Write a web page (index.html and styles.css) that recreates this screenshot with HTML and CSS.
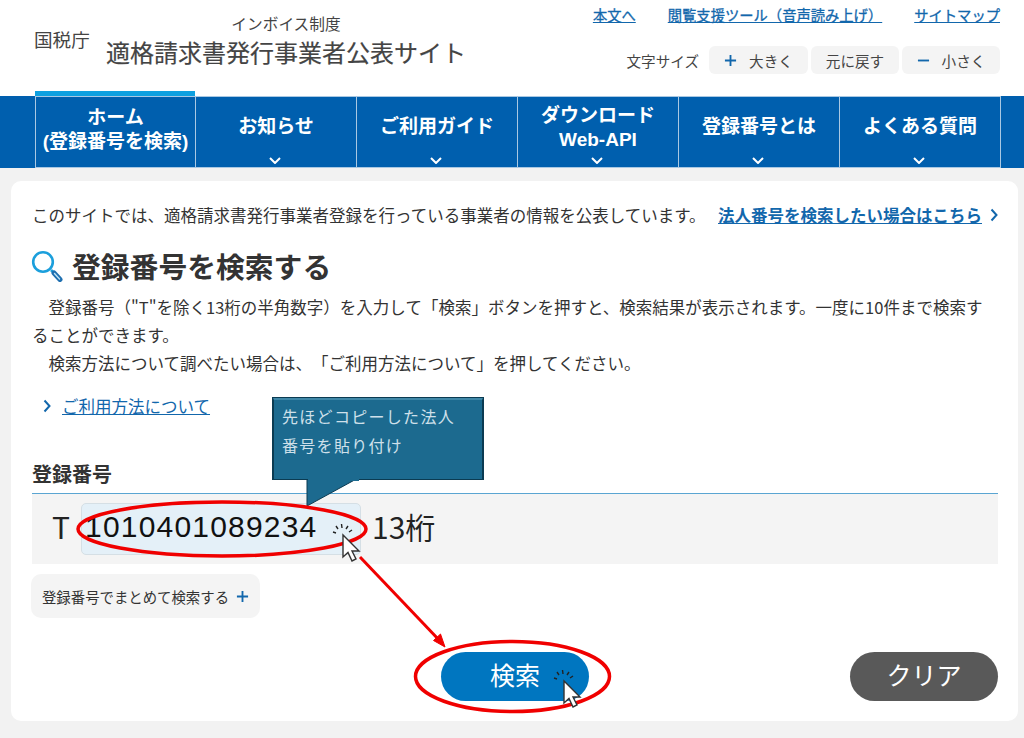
FILE: index.html
```html
<!DOCTYPE html>
<html lang="ja">
<head>
    <meta charset="UTF-8">
    <title>適格請求書発行事業者公表サイト</title>
    <link rel="stylesheet" href="styles.css">
</head>
<body>
    <!-- Cabecera -->
    <header class="site-header">
        <div class="brand">
            <div class="brand-agency">国税庁</div>
            <div class="brand-title">
                <div class="brand-sub">インボイス制度</div>
                <div class="brand-main">適格請求書発行事業者公表サイト</div>
            </div>
        </div>
        <div class="header-tools">
            <div class="top-links">
                <a href="#">本文へ</a>
                <a href="#">閲覧支援ツール（音声読み上げ）</a>
                <a href="#">サイトマップ</a>
            </div>
            <div class="font-size">
                <span class="font-size-label">文字サイズ</span>
                <button class="size-btn size-large"><svg class="size-icon" viewBox="0 0 14 14"><path d="M7 1v12M1 7h12"/></svg>大きく</button>
                <button class="size-btn size-reset">元に戻す</button>
                <button class="size-btn size-small"><svg class="size-icon" viewBox="0 0 14 14"><path d="M1 7h12"/></svg>小さく</button>
            </div>
        </div>
    </header>

    <!-- Menu -->
    <nav class="global-nav">
        <a class="nav-item active" href="#"><span>ホーム<br>(登録番号を検索)</span></a>
        <a class="nav-item" href="#"><span>お知らせ</span><svg class="nav-chevron" viewBox="0 0 12 7"><path d="M1 1l5 5 5-5"/></svg></a>
        <a class="nav-item" href="#"><span>ご利用ガイド</span><svg class="nav-chevron" viewBox="0 0 12 7"><path d="M1 1l5 5 5-5"/></svg></a>
        <a class="nav-item two-lines" href="#"><span>ダウンロード<br>Web-API</span><svg class="nav-chevron" viewBox="0 0 12 7"><path d="M1 1l5 5 5-5"/></svg></a>
        <a class="nav-item" href="#"><span>登録番号とは</span><svg class="nav-chevron" viewBox="0 0 12 7"><path d="M1 1l5 5 5-5"/></svg></a>
        <a class="nav-item" href="#"><span>よくある質問</span><svg class="nav-chevron" viewBox="0 0 12 7"><path d="M1 1l5 5 5-5"/></svg></a>
    </nav>

    <!-- Contenido -->
    <main class="main-area">
        <section class="card">
            <div class="notice">
                <p>このサイトでは、適格請求書発行事業者登録を行っている事業者の情報を公表しています。</p>
                <a class="notice-link" href="#"><span>法人番号を検索したい場合はこちら</span><svg class="chevron" viewBox="0 0 8 14"><path d="M1.500 1.500L6.500 7l-5 5.500"/></svg></a>
            </div>

            <h1 class="page-title">
                <svg class="search-icon" viewBox="0 0 32 32">
                    <circle cx="12" cy="12" r="9.800" fill="none" stroke="#1b9fdc" stroke-width="2.600"/>
                    <path d="M20 20l2 2" stroke="#1b9fdc" stroke-width="2.600"/>
                    <path d="M23 23l6 6.500" stroke="#1f6fb0" stroke-width="5" stroke-linecap="round"/>
                    <path d="M23.500 23.500l5 5.500" stroke="#bfe3f5" stroke-width="1.400" stroke-linecap="round"/>
                </svg>
                登録番号を検索する
            </h1>
            <p class="lead">登録番号（"T"を除く13桁の半角数字）を入力して「検索」ボタンを押すと、検索結果が表示されます。一度に10件まで検索することができます。</p>
            <p class="lead">検索方法について調べたい場合は、「ご利用方法について」を押してください。</p>

            <a class="usage-link" href="#"><svg class="chevron" viewBox="0 0 8 14"><path d="M1.500 1.500L6.500 7l-5 5.500"/></svg><span>ご利用方法について</span></a>

            <h2 class="field-label">登録番号</h2>
            <div class="field-rule"></div>
            <div class="field-band">
                <span class="field-prefix">T</span>
                <div class="field-input">1010401089234</div>
                <span class="field-suffix">13桁</span>
            </div>

            <button class="bulk-btn">登録番号でまとめて検索する<svg class="bulk-icon" viewBox="0 0 14 14"><path d="M7 1v12M1 7h12"/></svg></button>

            <div class="actions">
                <button class="btn-search">検索</button>
                <button class="btn-clear">クリア</button>
            </div>
        </section>
    </main>

    <!-- Anotaciones sobre la captura -->
    <svg class="overlay" viewBox="0 0 1024 738">
        <path d="M307 477V506L360 477Z" fill="#1c6a8f" stroke="#0b3b52" stroke-width="1"/>
        <ellipse cx="222" cy="529" rx="144" ry="27" fill="none" stroke="#f00000" stroke-width="3.500"/>
        <ellipse cx="512.500" cy="676.500" rx="97" ry="35" fill="none" stroke="#f00000" stroke-width="3.500"/>
        <path d="M360 557L440 641" stroke="#f00000" stroke-width="3"/>
        <path d="M445 647L433.500 640.500 440.500 634Z" fill="#f00000" stroke="#f00000"/>
        <g class="click-mark" transform="translate(343 535)">
            <path d="M-7 -2l-3 -1M-5 -6l-2 -3M-1 -7l-.5 -4M3 -6l2 -3M6 -3l3 -2"/>
            <path class="cursor" d="M0 0V22L5 17.500 9 26 13 24 9 16H16Z"/>
        </g>
        <g class="click-mark" transform="translate(564 681)">
            <path d="M-7 -2l-3 -1M-5 -6l-2 -3M-1 -7l-.5 -4M3 -6l2 -3M6 -3l3 -2"/>
            <path class="cursor" d="M0 0V22L5 17.500 9 26 13 24 9 16H16Z"/>
        </g>
    </svg>
    <div class="callout">先ほどコピーした法人<br>番号を貼り付け</div>
</body>
</html>
```

FILE: styles.css
```css
/* Base */
* {
    box-sizing: border-box;
}

body {
    margin: 0;
    width: 1024px;
    height: 738px;
    position: relative;
    overflow: hidden;
    background: #fff;
    color: #333;
    font-family: "Noto Sans CJK JP", "Liberation Sans", sans-serif;
    font-size: 16.500px;
    text-spacing-trim: space-all;
}

a {
    color: #1267ac;
}

p,
h1,
h2 {
    margin: 0;
}

button {
    font-family: inherit;
    border: none;
    padding: 0;
}

/* Cabecera */
.site-header {
    height: 91px;
    padding: 0 24px 0 34px;
    display: flex;
    justify-content: space-between;
}

.brand {
    display: flex;
    align-items: flex-start;
    color: #444;
}

.brand-agency {
    font-size: 18.600px;
    line-height: 24px;
    margin-top: 27px;
    width: 72px;
}

.brand-title {
    padding-top: 14px;
    text-align: center;
}

.brand-sub {
    font-size: 15.700px;
    line-height: 20px;
}

.brand-main {
    font-size: 24px;
    line-height: 36px;
    -webkit-text-stroke: 0.2px #444;
}

.header-tools {
    display: flex;
    flex-direction: column;
    align-items: flex-end;
}

.top-links {
    display: flex;
    gap: 32px;
    font-size: 14.300px;
    line-height: 20px;
    padding-top: 5px;
    -webkit-text-stroke: 0.3px #1267ac;
}

.font-size {
    display: flex;
    align-items: center;
    margin-top: 21px;
    font-size: 14.600px;
}

.font-size-label {
    margin-right: 10px;
    color: #444;
}

.size-btn {
    height: 28px;
    margin-left: 3px;
    background: #f4f4f4;
    border-radius: 6px;
    color: #444;
    font-size: 14.600px;
    display: flex;
    align-items: center;
    justify-content: center;
}

.size-large {
    width: 99px;
    margin-left: 0;
}

.size-reset {
    width: 88px;
}

.size-small {
    width: 98px;
}

.size-icon {
    width: 13px;
    height: 13px;
    margin-right: 12px;
    fill: none;
    stroke: #1267ac;
    stroke-width: 2;
}

/* Menu */
.global-nav {
    height: 77px;
    padding: 5px 0 0 35px;
    display: flex;
    position: relative;
    background: linear-gradient(#fff 5px, #005fae 5px);
}

.nav-item {
    width: 161px;
    position: relative;
    display: flex;
    align-items: center;
    justify-content: center;
    padding-bottom: 10px;
    border-left: 1px solid #a9c8e3;
    border-top: 1px solid #a9c8e3;
    border-bottom: 1px solid #a9c8e3;
    color: #fff;
    font-family: "Liberation Sans", "Noto Sans CJK JP", sans-serif;
    font-size: 19px;
    font-weight: 700;
    line-height: 24px;
    text-align: center;
    text-decoration: none;
}

.nav-item:last-child {
    border-right: 1px solid #a9c8e3;
    width: 162px;
}

.nav-item.two-lines {
    padding-bottom: 8px;
}

.nav-item.active {
    width: 160px;
    padding-bottom: 4px;
    box-shadow: 0 -5px 0 #0ea0e0;
}

.nav-chevron {
    position: absolute;
    left: 73px;
    bottom: 3px;
    width: 12px;
    height: 7px;
    fill: none;
    stroke: #fff;
    stroke-width: 2;
}

/* Contenido */
.main-area {
    height: 570px;
    background: #f2f2f2;
    padding: 13px 6px 17px 11px;
}

.card {
    height: 540px;
    background: #fff;
    border-radius: 10px;
    padding: 20px 20px 0 21px;
}

.notice {
    display: flex;
    justify-content: space-between;
    align-items: center;
    height: 28px;
}

.notice-link {
    display: flex;
    align-items: center;
    gap: 8px;
    font-weight: 700;
}

.chevron {
    width: 8px;
    height: 14px;
    fill: none;
    stroke: #1267ac;
    stroke-width: 2;
}

.page-title {
    display: flex;
    align-items: center;
    gap: 9px;
    margin-top: 17px;
    height: 40px;
    font-size: 28.800px;
    font-weight: 700;
    line-height: 40px;
}

.search-icon {
    width: 32px;
    height: 32px;
    margin-left: -1px;
}

.lead {
    line-height: 28px;
    text-indent: 1em;
}

.page-title + .lead {
    margin-top: 7px;
}

.usage-link {
    display: flex;
    align-items: center;
    gap: 11px;
    margin: 15px 0 0 11px;
    height: 28px;
}

.field-label {
    margin-top: 38px;
    height: 32px;
    font-size: 20px;
    line-height: 32px;
    font-weight: 700;
}

.field-rule {
    height: 1px;
    margin-top: 3px;
    background: #5aa5d2;
}

.field-band {
    height: 70px;
    padding: 9px 0 0 20px;
    display: flex;
    align-items: flex-start;
    background: #f4f4f4;
    color: #222;
    font-size: 30px;
}

.field-prefix {
    width: 29px;
    line-height: 46px;
}

.field-input {
    width: 280px;
    height: 52px;
    padding-left: 3px;
    background: #e4f0f8;
    border: 1px solid #d5dfe5;
    border-radius: 5px;
    color: #111;
    font-family: "Liberation Sans", "Noto Sans CJK JP", sans-serif;
    font-size: 30px;
    letter-spacing: 1.200px;
    line-height: 46px;
}

.field-suffix {
    margin-left: 11px;
    line-height: 46px;
}

.bulk-btn {
    margin: 10px 0 0 -1px;
    width: 229px;
    height: 44px;
    display: flex;
    align-items: center;
    justify-content: center;
    gap: 7px;
    background: #f4f4f4;
    border-radius: 10px;
    color: #333;
    font-size: 14.400px;
}

.bulk-icon {
    width: 13px;
    height: 13px;
    fill: none;
    stroke: #1267ac;
    stroke-width: 2;
}

.actions {
    display: grid;
    grid-template-columns: 1fr 148px 1fr;
    margin-top: 34px;
}

.btn-search,
.btn-clear {
    width: 148px;
    height: 49px;
    padding-bottom: 6px;
    border-radius: 25px;
    color: #fff;
    font-size: 25px;
}

.btn-search {
    grid-column: 2;
    background: #0076c0;
}

.btn-clear {
    grid-column: 3;
    justify-self: end;
    background: #595959;
}

/* Anotaciones */
.overlay {
    position: absolute;
    top: 0;
    left: 0;
    width: 1024px;
    height: 738px;
    pointer-events: none;
}

.callout {
    position: absolute;
    left: 273px;
    top: 398px;
    width: 210px;
    height: 81px;
    padding: 2px 0 0 8px;
    background: #1c6a8f;
    border: 1px solid #0b3b52;
    border-top: 2px solid #3f88a8;
    box-shadow: 0 0 0 1px #0b3b52;
    border-bottom: none;
    color: #cfe0ea;
    font-size: 16px;
    letter-spacing: 1.300px;
    line-height: 29px;
}

/* Une la cola con el globo */
.callout::after {
    content: "";
    position: absolute;
    left: 34px;
    bottom: -2px;
    width: 51px;
    height: 4px;
    background: #1c6a8f;
}

.click-mark path {
    fill: none;
    stroke: #222;
    stroke-width: 1.400;
}

.click-mark .cursor {
    fill: #fff;
    stroke: #333;
}
```
